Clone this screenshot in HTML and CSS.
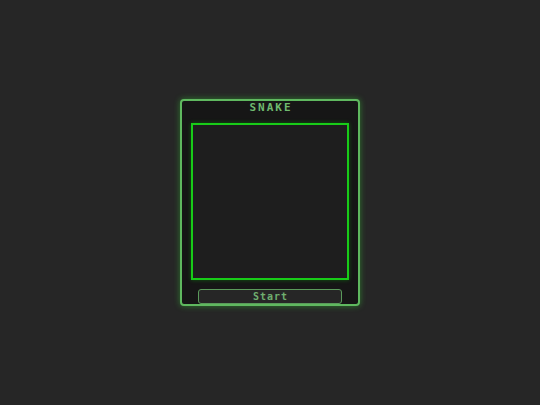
FILE: index.html
```html
<!DOCTYPE html>
<html>
<head>
<meta charset="utf-8">
<link rel="stylesheet" href="styles.css">
</head>
<body>
<div class="stage">
  <div class="card">
    <div class="title">SNAKE</div>
    <div class="board"></div>
    <button class="start">Start</button>
  </div>
</div>
</body>
</html>
```
FILE: styles.css
```css
html, body {
  margin: 0;
  padding: 0;
  background: #262626;
}
.stage {
  width: 540px;
  height: 405px;
  display: flex;
  align-items: center;
  justify-content: center;
}
.card {
  box-sizing: border-box;
  width: 180px;
  height: 207px;
  border: 2px solid #5fb85f;
  border-radius: 4px;
  background: #161616;
  box-shadow: 0 0 6px rgba(60, 220, 60, 0.45);
  display: flex;
  flex-direction: column;
  align-items: center;
  padding-top: 0;
}
.title {
  font-family: "DejaVu Sans Mono", monospace;
  font-weight: bold;
  font-size: 11px;
  letter-spacing: 2px;
  padding-left: 2px;
  line-height: 14px;
  color: #6fba6f;
  height: 14px;
}
.board {
  box-sizing: border-box;
  width: 158px;
  height: 159px;
  margin-top: 8px;
  border: 2px solid #18cc18;
  background: #1e1e1e;
  box-shadow: 0 0 4px rgba(0, 220, 0, 0.35);
}
.start {
  box-sizing: border-box;
  width: 144px;
  height: 15px;
  margin-top: 9px;
  padding: 0 0 0 1px;
  border: 1px solid #5a9a5a;
  border-radius: 3px;
  background: #262626;
  font-family: "DejaVu Sans Mono", monospace;
  font-weight: bold;
  font-size: 10px;
  line-height: 13px;
  letter-spacing: 1px;
  color: #6fae6f;
}
```
